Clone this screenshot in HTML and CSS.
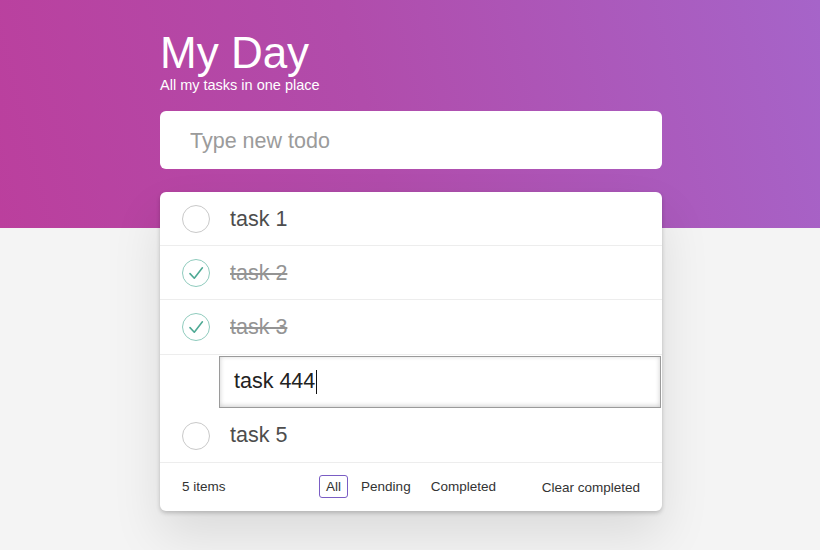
FILE: index.html
```html
<!DOCTYPE html>
<html lang="en">
<head>
<meta charset="utf-8">
<title>My Day</title>
<link rel="stylesheet" href="styles.css">
</head>
<body>
<main class="app">
  <header class="head">
    <h1 class="title">My Day</h1>
    <p class="subtitle">All my tasks in one place</p>
  </header>
  <input class="new-todo" type="text" placeholder="Type new todo">
  <section class="card">
    <ul class="list">
      <li class="row">
        <span class="toggle"></span>
        <span class="label">task 1</span>
      </li>
      <li class="row done">
        <svg class="check" viewBox="0 0 28 28" width="28" height="28"><circle cx="14" cy="14" r="13.5" fill="none" stroke="#8fcbbd" stroke-width="1"/><path d="M8 14.6 L12.3 19.2 L20.4 8.8" fill="none" stroke="#4ea994" stroke-width="1.6" stroke-linecap="round" stroke-linejoin="round"/></svg>
        <span class="label">task 2</span>
      </li>
      <li class="row done">
        <svg class="check" viewBox="0 0 28 28" width="28" height="28"><circle cx="14" cy="14" r="13.5" fill="none" stroke="#8fcbbd" stroke-width="1"/><path d="M8 14.6 L12.3 19.2 L20.4 8.8" fill="none" stroke="#4ea994" stroke-width="1.6" stroke-linecap="round" stroke-linejoin="round"/></svg>
        <span class="label">task 3</span>
      </li>
      <li class="row editing">
        <div class="edit">task 444<span class="caret"></span></div>
      </li>
      <li class="row">
        <span class="toggle"></span>
        <span class="label">task 5</span>
      </li>
    </ul>
    <footer class="footer">
      <span class="count">5 items</span>
      <nav class="filters">
        <a class="filter selected">All</a>
        <a class="filter">Pending</a>
        <a class="filter">Completed</a>
      </nav>
      <span class="clear">Clear completed</span>
    </footer>
  </section>
</main>
</body>
</html>
```

FILE: styles.css
```css
* { box-sizing: border-box; }

html, body {
  margin: 0;
  padding: 0;
}

body {
  font-family: "Liberation Sans", Arial, sans-serif;
  background:
    linear-gradient(76deg, #bb3f9d 0%, #b14cab 45%, #a664c9 100%) top left / 100% 228px no-repeat,
    #f4f4f4;
  min-height: 550px;
  color: #4d4d4d;
}

.app {
  width: 502px;
  margin: 0 auto;
  padding-top: 31px;
  transform: translateX(1px);
}

.title {
  margin: 0;
  font-size: 44px;
  line-height: 44px;
  font-weight: 400;
  color: #fff;
}

.subtitle {
  margin: 2px 0 0;
  font-size: 14.5px;
  line-height: 16px;
  color: #fff;
}

.new-todo {
  display: block;
  width: 100%;
  height: 58px;
  margin-top: 18px;
  border: none;
  border-radius: 6px;
  background: #fff;
  padding: 2px 30px 0;
  font-family: inherit;
  font-size: 21.5px;
  color: #4d4d4d;
  outline: none;
}

.new-todo::placeholder {
  color: #9b9b9b;
}

.card {
  margin-top: 23px;
  background: #fff;
  border-radius: 6px;
  box-shadow: 0 2px 4px rgba(0, 0, 0, 0.2), 0 25px 50px rgba(0, 0, 0, 0.1);
}

.list {
  list-style: none;
  margin: 0;
  padding: 0;
}

.row {
  display: flex;
  align-items: center;
  height: 54.2px;
  padding-left: 22px;
  padding-top: 1px;
  border-bottom: 1px solid #ededed;
  font-size: 21.5px;
}

.toggle {
  width: 28px;
  height: 28px;
  border-radius: 50%;
  border: 1px solid #c9c9c9;
  flex: none;
}

.check {
  flex: none;
  display: block;
}

.label {
  margin-left: 20px;
  color: #4d4d4d;
}

.done .label {
  color: #949494;
  text-decoration: line-through;
}

.row.editing {
  padding: 1px 1px 1px 59px;
  border-bottom: none;
}

.edit {
  flex: 1;
  align-self: stretch;
  display: flex;
  align-items: center;
  padding-left: 14px;
  border: 1px solid #9a9a9a;
  box-shadow: inset 0 -1px 5px 0 rgba(0, 0, 0, 0.2);
  font-size: 21.5px;
  color: #222;
}

.caret {
  display: inline-block;
  width: 1px;
  height: 24px;
  background: #111;
  margin-left: 1px;
}

.footer {
  display: flex;
  align-items: center;
  height: 48px;
  padding: 0 22px;
  font-size: 13.5px;
  color: #333;
}

.count,
.clear {
  flex: 1 1 0;
}

.clear {
  text-align: right;
  padding-top: 2px;
}

.filters {
  display: flex;
  gap: 6px;
}

.filter {
  padding: 3px 6px;
  border: 1px solid transparent;
  border-radius: 3px;
  color: #333;
}

.filter.selected {
  border-color: #7a5dc4;
}
```
